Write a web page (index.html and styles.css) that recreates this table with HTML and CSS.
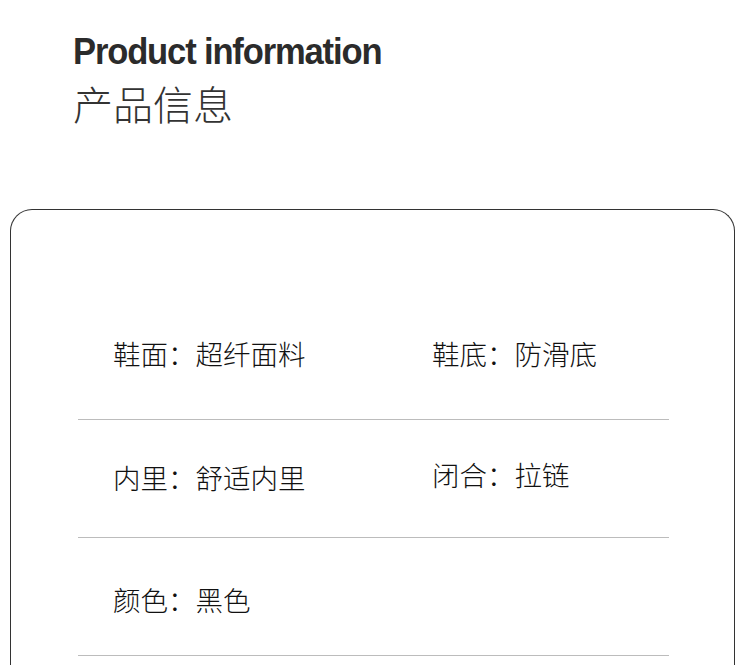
FILE: index.html
```html
<!DOCTYPE html>
<html lang="zh">
<head>
<meta charset="utf-8">
<link rel="stylesheet" href="styles.css">
</head>
<body>
<header class="head">
  <h1 class="title-en">Product information</h1>
  <h2 class="title-cn">产品信息</h2>
</header>
<section class="card">
  <div class="row row-first">
    <div class="cell">鞋面：超纤面料</div>
    <div class="cell">鞋底：防滑底</div>
  </div>
  <div class="row">
    <div class="cell cell-low">内里：舒适内里</div>
    <div class="cell cell-high">闭合：拉链</div>
  </div>
  <div class="row row-last">
    <div class="cell">颜色：黑色</div>
  </div>
</section>
</body>
</html>
```
FILE: styles.css
```css
html, body {
  margin: 0;
  padding: 0;
  background: #fff;
  overflow: hidden;
}
body {
  width: 750px;
  height: 665px;
  font-family: "Noto Sans CJK SC", "Noto Sans", sans-serif;
}
.head {
  padding: 32px 0 0 73px;
  height: 179px;
  box-sizing: border-box;
}
.title-en {
  margin: 0;
  font-family: "Liberation Sans", "Noto Sans CJK SC", sans-serif;
  font-weight: 700;
  font-size: 36px;
  line-height: 40px;
  letter-spacing: -1.2px;
  color: #2b2b2b;
  transform: scaleX(0.96);
  transform-origin: left center;
}
.title-cn {
  margin: 7px 0 0 0;
  font-family: "Noto Sans CJK SC", sans-serif;
  font-weight: 300;
  font-size: 40px;
  line-height: 48px;
  color: #333;
}
.card {
  box-sizing: border-box;
  margin: 30px 15px 0 10px;
  border: 1.5px solid #333;
  border-bottom: none;
  border-radius: 22px 22px 0 0;
  padding: 0 65px 0 67px;
  height: 456px;
}
.row {
  display: grid;
  grid-template-columns: 354px 1fr;
  border-bottom: 1px solid #bcbcbc;
  height: 117px;
  align-items: center;
}
.row-first {
  margin-top: 91px;
  height: 118px;
  align-items: start;
}
.row-first .cell { margin-top: 37px; }
.cell {
  padding-left: 35px;
  font-size: 27.5px;
  font-weight: 300;
  color: #111;
  line-height: 30px;
}
.row .cell:nth-child(2) { padding-left: 0; }
.cell-low { margin-top: -4px; }
.cell-high { margin-top: -10px; }
.row-last .cell { margin-top: 4px; }
```
